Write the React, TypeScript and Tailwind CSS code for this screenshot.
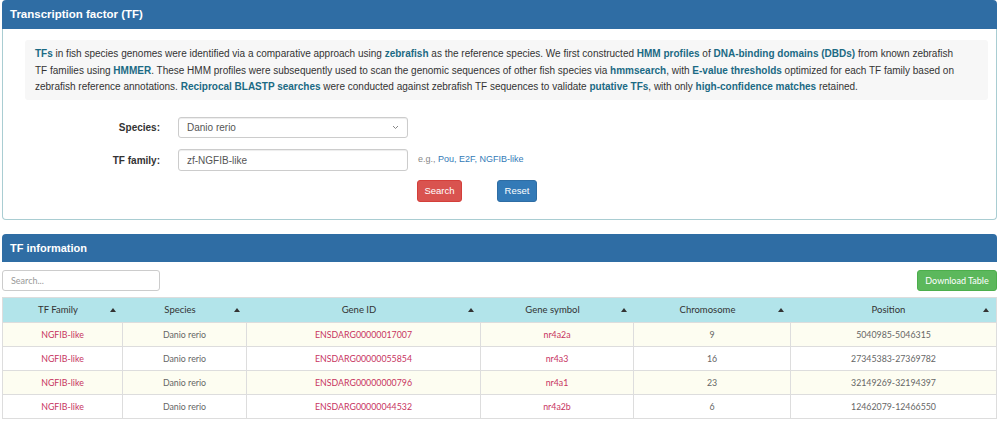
const rows = [
  { family: 'NGFIB-like', species: 'Danio rerio', gene: 'ENSDARG00000017007', symbol: 'nr4a2a', chr: '9', pos: '5040985-5046315' },
  { family: 'NGFIB-like', species: 'Danio rerio', gene: 'ENSDARG00000055854', symbol: 'nr4a3', chr: '16', pos: '27345383-27369782' },
  { family: 'NGFIB-like', species: 'Danio rerio', gene: 'ENSDARG00000000796', symbol: 'nr4a1', chr: '23', pos: '32149269-32194397' },
  { family: 'NGFIB-like', species: 'Danio rerio', gene: 'ENSDARG00000044532', symbol: 'nr4a2b', chr: '6', pos: '12462079-12466550' },
];

const columns = [
  { label: 'TF Family', w: 'w-[120px]' },
  { label: 'Species', w: 'w-[124px]' },
  { label: 'Gene ID', w: 'w-[234px]' },
  { label: 'Gene symbol', w: 'w-[153px]' },
  { label: 'Chromosome', w: 'w-[157px]' },
  { label: 'Position', w: 'flex-1' },
];

function B({ children }: { children: React.ReactNode }) {
  return <b className="font-bold text-[#1b6a84]">{children}</b>;
}

function SortArrow() {
  return (
    <svg width="6" height="4" viewBox="0 0 6 4" className="absolute right-[7px] top-1/2 -translate-y-1/2">
      <path d="M0 4 L3 0 L6 4 Z" fill="#333" />
    </svg>
  );
}

export default function App() {
  return (
    <div className="w-[1000px] h-[432px] overflow-hidden bg-white pl-[2px] pr-[3px] font-['Liberation_Sans',Arial,sans-serif]">
      {/* Search panel */}
      <div className="rounded-[4px]">
        <div className="h-[29px] bg-[#2f6da4] rounded-t-[4px] flex items-center px-[8px] text-white font-bold text-[11.5px]">
          Transcription factor (TF)
        </div>
        <div className="h-[191px] border border-t-0 border-[#a9cdd2] rounded-b-[4px] pt-[11px] pl-[22px] pr-[8px]">
          <div className="bg-[#f7f7f7] rounded-[3px] h-[60px] pl-[10px] pt-[6px] text-[10px] leading-[16.5px] text-[#333] whitespace-nowrap">
            <B>TFs</B> in fish species genomes were identified via a comparative approach using <B>zebrafish</B> as the reference species. We first constructed <B>HMM profiles</B> of <B>DNA-binding domains (DBDs)</B> from known zebrafish
            <br />
            TF families using <B>HMMER</B>. These HMM profiles were subsequently used to scan the genomic sequences of other fish species via <B>hmmsearch</B>, with <B>E-value thresholds</B> optimized for each TF family based on
            <br />
            zebrafish reference annotations. <B>Reciprocal BLASTP searches</B> were conducted against zebrafish TF sequences to validate <B>putative TFs</B>, with only <B>high-confidence matches</B> retained.
          </div>

          <div className="mt-[17px] flex items-center">
            <label className="w-[135px] text-right font-bold text-[10px] text-[#333]">Species:</label>
            <div className="ml-[18px] w-[230px] h-[21px] border border-[#ccc] rounded-[3px] flex items-center justify-between px-[8px] text-[10px] text-[#555] shadow-[inset_0_1px_1px_rgba(0,0,0,0.075)]">
              <span>Danio rerio</span>
              <svg width="7" height="5" viewBox="0 0 7 5">
                <path d="M1 1 L3.5 3.5 L6 1" fill="none" stroke="#888" strokeWidth="1" />
              </svg>
            </div>
          </div>

          <div className="mt-[11px] flex items-center">
            <label className="w-[135px] text-right font-bold text-[10px] text-[#333]">TF family:</label>
            <div className="ml-[18px] w-[230px] h-[22px] border border-[#ccc] rounded-[3px] flex items-center px-[8px] text-[10px] text-[#555] shadow-[inset_0_1px_1px_rgba(0,0,0,0.075)]">
              zf-NGFIB-like
            </div>
            <span className="ml-[10px] text-[9px] text-[#888]">
              e.g., <span className="text-[#337ab7]">Pou, E2F, NGFIB-like</span>
            </span>
          </div>

          <div className="mt-[9px] flex items-center pl-[392px] gap-[35px]">
            <button className="w-[45px] h-[22px] bg-[#d9534f] border border-[#d43f3a] rounded-[3px] text-white text-[9.5px]">Search</button>
            <button className="w-[40px] h-[22px] bg-[#337ab7] border border-[#2e6da4] rounded-[3px] text-white text-[9.5px]">Reset</button>
          </div>
        </div>
      </div>

      {/* Results panel */}
      <div className="mt-[14px]">
        <div className="h-[28px] bg-[#2f6da4] rounded-t-[4px] flex items-center px-[8px] text-white font-bold text-[11px]">
          TF information
        </div>
        <div className="mt-[8px] flex items-center justify-between">
          <div className="w-[158px] h-[21px] border border-[#ccc] rounded-[3px] flex items-center px-[8px] text-[9px] text-[#999] font-['Lato',sans-serif]">
            Search...
          </div>
          <button className="w-[80px] h-[21px] bg-[#5cb85c] border border-[#4cae4c] rounded-[3px] text-white text-[9px] font-['Lato',sans-serif]">
            Download Table
          </button>
        </div>

        <div className="mt-[6px] border border-[#ddd] font-['Lato',sans-serif]">
          <div className="flex h-[24px] bg-[#b2e4ea] text-[9.5px] text-[#333]">
            {columns.map((c) => (
              <div key={c.label} className={`${c.w} relative flex items-center justify-center pr-[10px]`}>
                {c.label}
                <SortArrow />
              </div>
            ))}
          </div>
          {rows.map((r, i) => (
            <div key={r.gene} className={`flex h-[24px] border-t border-[#ddd] text-[8.8px] ${i % 2 === 0 ? 'bg-[#fdfdf1]' : 'bg-white'}`}>
              <div className="w-[120px] border-r border-[#ddd] flex items-center justify-center text-[#c7345f]">{r.family}</div>
              <div className="w-[124px] border-r border-[#ddd] flex items-center justify-center text-[#666]">{r.species}</div>
              <div className="w-[234px] border-r border-[#ddd] flex items-center justify-center text-[#c7345f]">{r.gene}</div>
              <div className="w-[153px] border-r border-[#ddd] flex items-center justify-center text-[#c7345f]">{r.symbol}</div>
              <div className="w-[157px] border-r border-[#ddd] flex items-center justify-center text-[#666]">{r.chr}</div>
              <div className="flex-1 flex items-center justify-center text-[#666]">{r.pos}</div>
            </div>
          ))}
        </div>
      </div>
    </div>
  );
}
